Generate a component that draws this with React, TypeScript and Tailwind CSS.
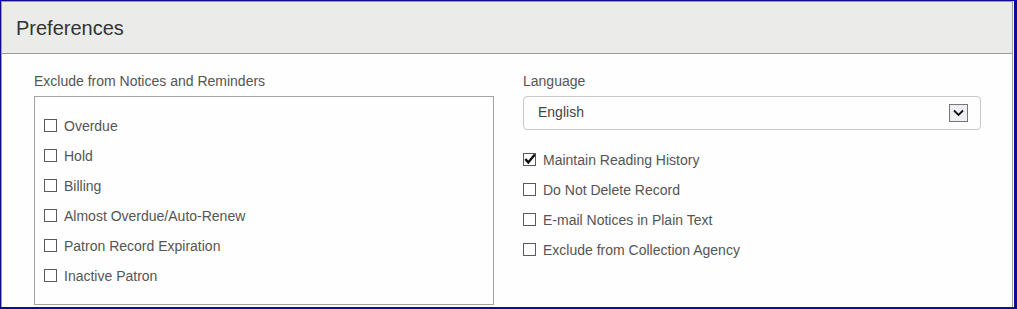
import React from 'react';

const noticeOptions = [
  'Overdue',
  'Hold',
  'Billing',
  'Almost Overdue/Auto-Renew',
  'Patron Record Expiration',
  'Inactive Patron',
];

const otherOptions = [
  { label: 'Maintain Reading History', checked: true },
  { label: 'Do Not Delete Record', checked: false },
  { label: 'E-mail Notices in Plain Text', checked: false },
  { label: 'Exclude from Collection Agency', checked: false },
];

function Box({ checked }: { checked?: boolean }) {
  return (
    <span className="relative w-[13px] h-[13px] -mt-[2px] shrink-0 border border-[#5a5a5a] bg-white">
      {checked && (
        <svg className="absolute -left-[1px] -top-[2px]" width="14" height="14" viewBox="0 0 14 14">
          <path d="M2.3 7 L5.3 10.4 L11.8 2.4" fill="none" stroke="#111" strokeWidth="2.4" />
        </svg>
      )}
    </span>
  );
}

function CheckRow({ label, checked }: { label: string; checked?: boolean }) {
  return (
    <div className="flex items-center h-[30px]">
      <Box checked={checked} />
      <span className="ml-[7px] text-[14px] leading-[20px] text-[#555]">{label}</span>
    </div>
  );
}

export default function App() {
  return (
    <div
      className="w-[1017px] h-[309px] bg-white border-l border-t border-r-[3px] border-b-2 border-[#0c0c94] pr-[1px] overflow-hidden"
      style={{ fontFamily: '"Liberation Sans", Arial, sans-serif' }}
    >
      <div className="h-full border-l border-t border-r border-[#9c9c9c] flex flex-col overflow-hidden">
        {/* Header */}
        <div className="h-[52px] shrink-0 bg-[#ebecea] border-b border-[#9c9c9c] flex items-center pl-[14px]">
          <h2 className="text-[20px] text-[#333] leading-none">Preferences</h2>
        </div>

        {/* Body */}
        <div className="flex-1 bg-[#fdfefd] grid grid-cols-[460px_458px] gap-x-[29px] pl-[32px] pt-[17px]">
          <div>
            <div className="text-[14px] leading-[20px] text-[#555] mb-[5px]">Exclude from Notices and Reminders</div>
            <div className="h-[209px] border border-[#a3a3a3] pt-[14px] pl-[9px]">
              {noticeOptions.map((o) => (
                <CheckRow key={o} label={o} />
              ))}
            </div>
          </div>

          <div>
            <div className="text-[14px] leading-[20px] text-[#555] mb-[5px]">Language</div>
            <div className="h-[34px] border border-[#c8c8c8] rounded-[4px] flex items-center justify-between pl-[14px] pr-[12px]">
              <span className="text-[14px] text-[#444] -mt-[2px]">English</span>
              <span className="w-[19px] h-[18px] border border-[#777] bg-[#eeeef4] flex items-center justify-center">
                <svg width="11" height="8" viewBox="0 0 11 8">
                  <path d="M1 1.5 L5.5 6 L10 1.5" fill="none" stroke="#111" strokeWidth="1.8" />
                </svg>
              </span>
            </div>
            <div className="mt-[15px]">
              {otherOptions.map((o) => (
                <CheckRow key={o.label} label={o.label} checked={o.checked} />
              ))}
            </div>
          </div>
        </div>
      </div>
    </div>
  );
}
